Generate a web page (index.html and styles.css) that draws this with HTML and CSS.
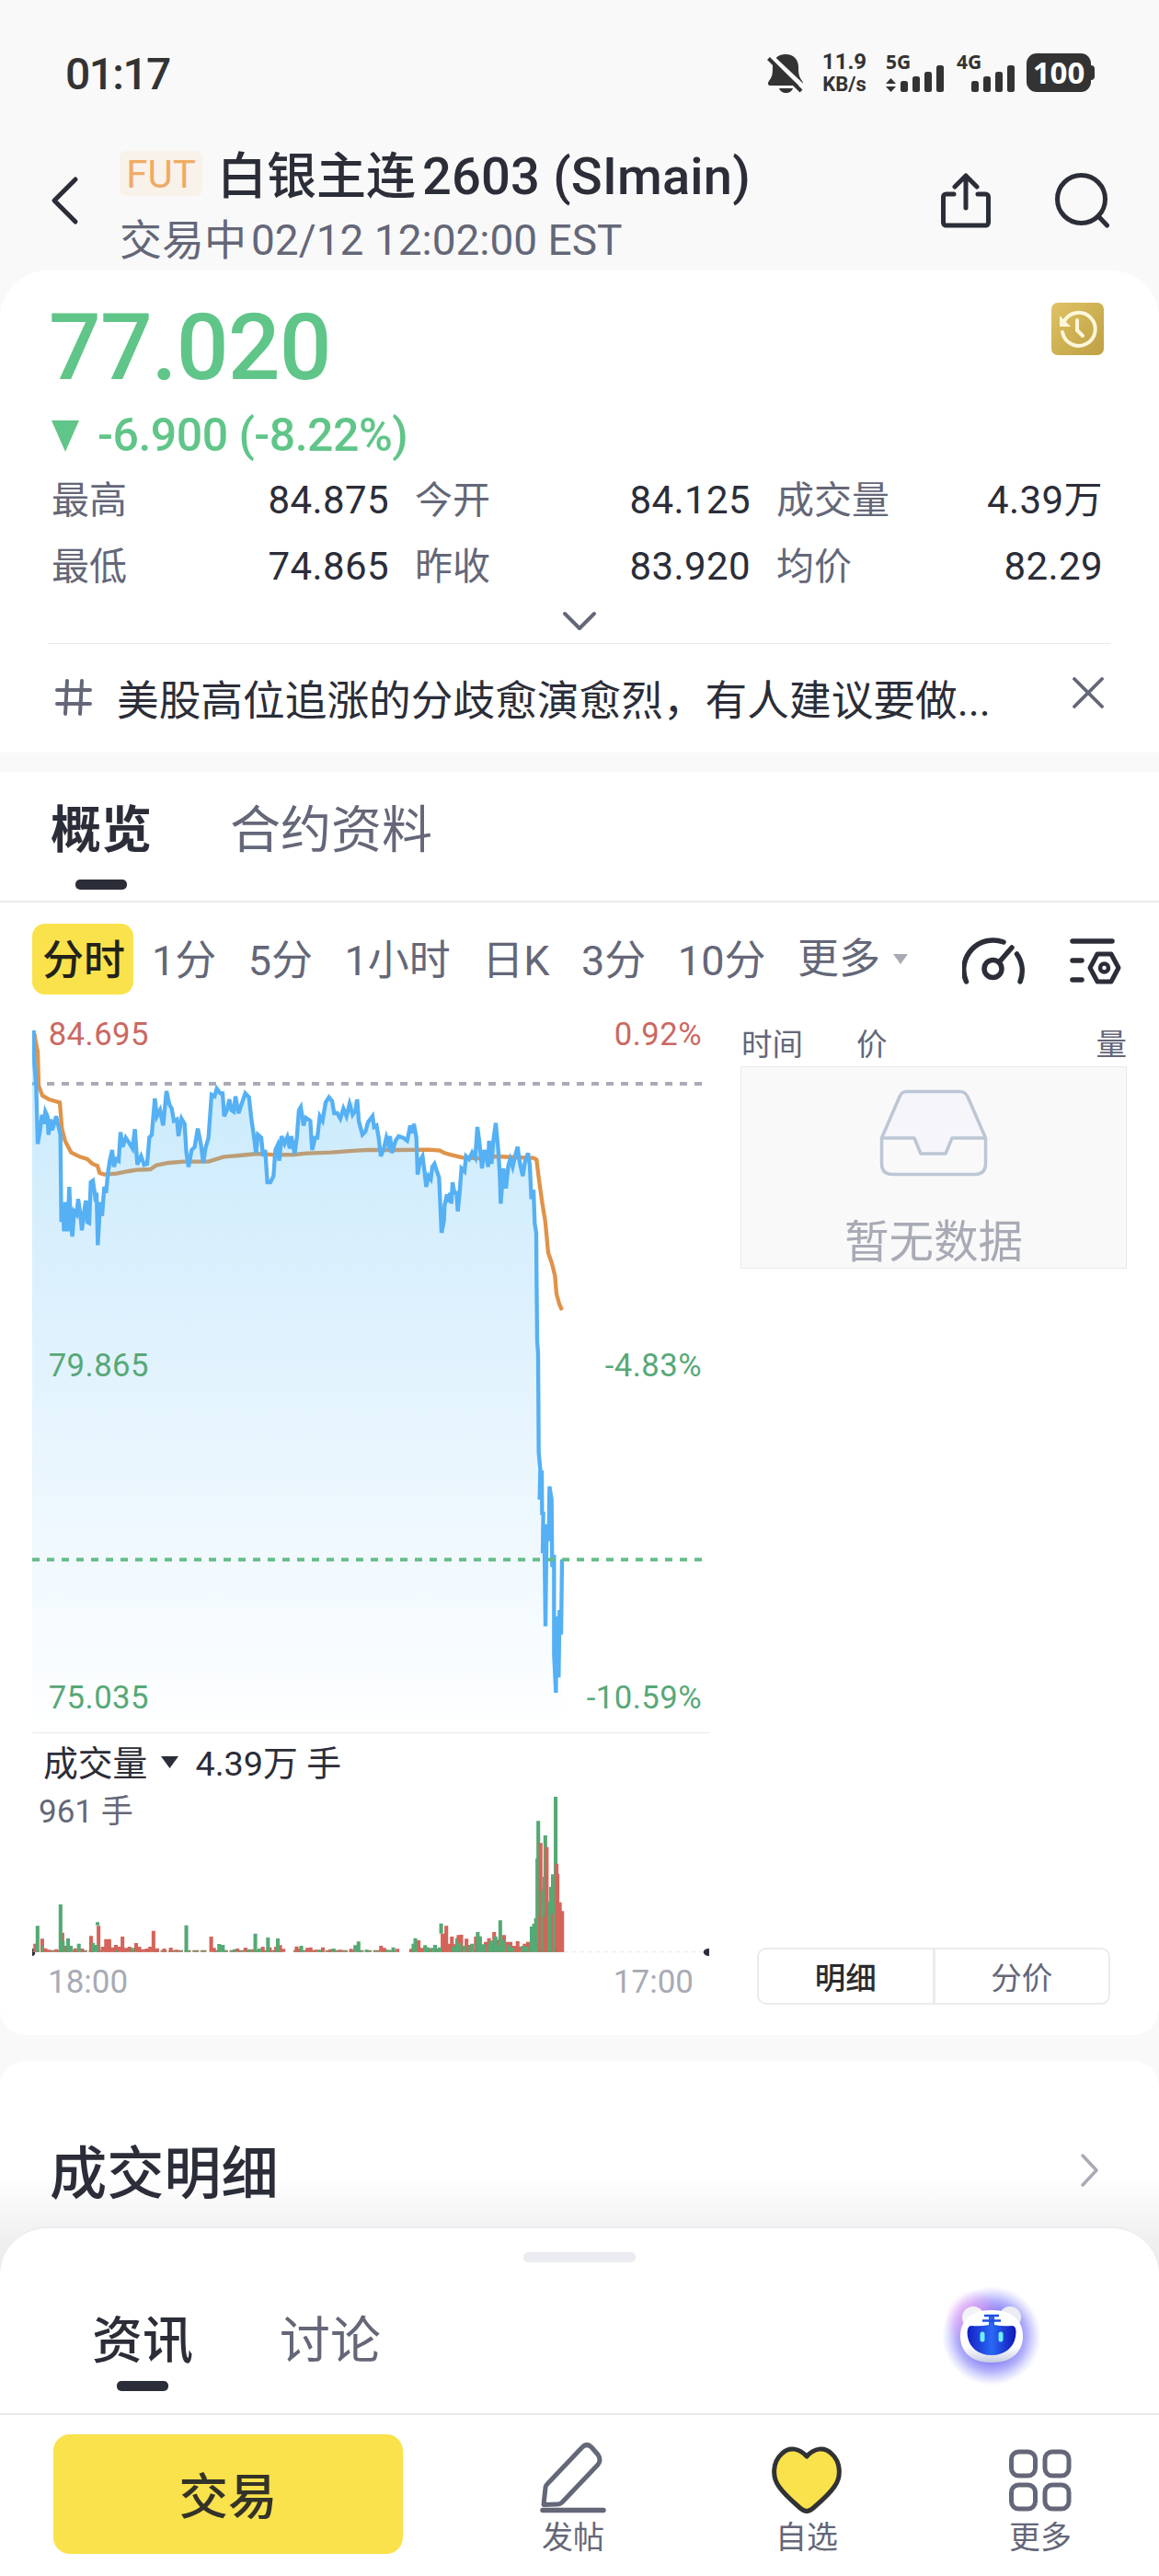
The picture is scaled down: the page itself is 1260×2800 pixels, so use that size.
FILE: index.html
```html
<!DOCTYPE html>
<html lang="zh-CN">
<head>
<meta charset="utf-8">
<title>白银主连2603 (SImain)</title>
<link rel="stylesheet" href="styles.css">
</head>
<body>

<div class="statusbar">
	<div class="clock">01:17</div>
	<div class="indicators">
		<svg class="bell" width="40" height="44" viewBox="0 0 40 44">
			<path d="M20 1C11 1 6 7 6 15c0 9-1 11-4 15-2 3-1 5 2 5h32c3 0 4-2 2-5-3-4-4-7-4-15 0-8-5-14-14-14z" fill="#333"/>
			<path d="M13 38h15c-1 3-4 5-7.500 5s-6.500-2-7.500-5z" fill="#333"/>
			<path d="M4 3l36 34" stroke="#f9f9f9" stroke-width="5"/>
			<path d="M1.500 5.500L37 41" stroke="#333" stroke-width="4"/>
		</svg>
		<div class="speed"><div class="rate">11.9</div><div class="unit">KB/s</div></div>
		<div class="signal sim1">
			<div class="net">5G</div>
			<svg width="63" height="30" viewBox="0 0 63 30">
				<path d="M0 20l5.500-6 5.500 6zM0 23h11l-5.500 6z" fill="#333"/>
				<rect x="16" y="17" width="8" height="12" rx="2.500" fill="#333"/>
				<rect x="29" y="12" width="8" height="17" rx="2.500" fill="#333"/>
				<rect x="42" y="7" width="8" height="22" rx="2.500" fill="#333"/>
				<rect x="55" y="0" width="8" height="29" rx="2.500" fill="#333"/>
			</svg>
		</div>
		<div class="signal sim2">
			<div class="net">4G</div>
			<svg width="63" height="30" viewBox="0 0 63 30">
				<rect x="16" y="17" width="8" height="12" rx="2.500" fill="#333"/>
				<rect x="29" y="12" width="8" height="17" rx="2.500" fill="#333"/>
				<rect x="42" y="7" width="8" height="22" rx="2.500" fill="#333"/>
				<rect x="55" y="0" width="8" height="29" rx="2.500" fill="#333"/>
			</svg>
		</div>
		<div class="battery">100</div>
		<div class="battery-cap"></div>
	</div>
</div>

<div class="header">
	<svg class="back" width="34" height="54" viewBox="0 0 34 54"><path d="M29 4L6 27l23 23" fill="none" stroke="#2b2d38" stroke-width="5" stroke-linecap="round" stroke-linejoin="round"/></svg>
	<div class="names">
		<div class="name"><span class="tag">FUT</span><span class="cn">白银主连</span><span class="code">2603 (SImain)</span></div>
		<div class="state"><span class="cn">交易中</span><span>02/12 12:02:00 EST</span></div>
	</div>
	<svg class="share" width="54" height="60" viewBox="0 0 54 60"><path d="M14 23H5.500a3 3 0 0 0-3 3v28a3 3 0 0 0 3 3h43a3 3 0 0 0 3-3V26a3 3 0 0 0-3-3H40M27 38V3M15 15L27 3l12 12" fill="none" stroke="#2b2d38" stroke-width="5" stroke-linecap="round" stroke-linejoin="round"/></svg>
	<svg class="search" width="60" height="60" viewBox="0 0 60 60"><circle cx="28.500" cy="28.500" r="26" fill="none" stroke="#2b2d38" stroke-width="5"/><path d="M47 47l9.500 10" stroke="#2b2d38" stroke-width="5" stroke-linecap="round"/></svg>
</div>

<div class="quote">
	<div class="quote-top">
		<div class="price">77.020</div>
		<svg class="history" width="57" height="57" viewBox="0 0 57 57">
			<defs><linearGradient id="gold" x1="0" y1="0" x2="1" y2="1"><stop offset="0" stop-color="#e0c266"/><stop offset=".5" stop-color="#cdb152"/><stop offset="1" stop-color="#bf9f45"/></linearGradient></defs>
			<rect width="57" height="57" rx="7" fill="url(#gold)"/>
			<path d="M14 20A18 18 0 1 1 12 32" fill="none" stroke="#fff7dc" stroke-width="4" stroke-linecap="round"/>
			<path d="M9 14v12h12z" fill="#fff7dc"/>
			<path d="M28 19v11l6 6" fill="none" stroke="#fff7dc" stroke-width="4" stroke-linecap="round" stroke-linejoin="round"/>
		</svg>
	</div>
	<div class="change"><svg width="30" height="34" viewBox="0 0 30 34"><path d="M0 0h30L15 34z" fill="#60c588"/></svg>-6.900 (-8.22%)</div>
	<div class="stats">
		<div class="stat"><span>最高</span><b>84.875</b></div>
		<div class="stat"><span>今开</span><b>84.125</b></div>
		<div class="stat"><span>成交量</span><b>4.39万</b></div>
		<div class="stat"><span>最低</span><b>74.865</b></div>
		<div class="stat"><span>昨收</span><b>83.920</b></div>
		<div class="stat"><span>均价</span><b>82.29</b></div>
	</div>
	<div class="expand"><svg width="38" height="24" viewBox="0 0 38 24"><path d="M3 3l16 16L35 3" fill="none" stroke="#646778" stroke-width="4" stroke-linecap="round" stroke-linejoin="round"/></svg></div>
	<div class="topic">
		<svg class="hash" width="40" height="40" viewBox="0 0 40 40"><path d="M2 12h36M2 27h36M13 2l-2 36M29 2l-2 36" stroke="#646778" stroke-width="4" stroke-linecap="round"/></svg>
		<div class="topic-text">美股高位追涨的分歧愈演愈烈，有人建议要做...</div>
		<svg class="close" width="34" height="34" viewBox="0 0 34 34"><path d="M2 2l30 30M32 2L2 32" stroke="#646778" stroke-width="3.800" stroke-linecap="round"/></svg>
	</div>
</div>

<div class="overview">
	<div class="tabs">
		<div class="tab active">概览</div>
		<div class="tab">合约资料</div>
	</div>
	<div class="toolbar">
		<div class="period selected">分时</div>
		<div class="periods">
			<div class="period">1分</div>
			<div class="period">5分</div>
			<div class="period">1小时</div>
			<div class="period">日K</div>
			<div class="period">3分</div>
			<div class="period">10分</div>
			<div class="period more">更多<svg width="16" height="11" viewBox="0 0 16 11"><path d="M0 0h16L8 11z" fill="#a8aab5"/></svg></div>
		</div>
		<svg class="gauge" width="68" height="54" viewBox="0 0 68 54"><path d="M4.500 50A32 32 0 0 1 45 7M63 50A32 32 0 0 0 59.500 20" fill="none" stroke="#2b2d38" stroke-width="5.500" stroke-linecap="round"/><circle cx="33.500" cy="36" r="9.500" fill="none" stroke="#2b2d38" stroke-width="5.500"/><path d="M40 29l14-16" stroke="#2b2d38" stroke-width="5.500" stroke-linecap="round"/></svg>
		<svg class="adjust" width="56" height="54" viewBox="0 0 56 54"><path d="M3 6h43M3 27h10M3 48h10" stroke="#2b2d38" stroke-width="5.500" stroke-linecap="round"/><path d="M30 20h15l8 15-8 15H30l-8-15z" fill="none" stroke="#2b2d38" stroke-width="5" stroke-linejoin="round"/><circle cx="37.500" cy="35" r="4.500" fill="none" stroke="#2b2d38" stroke-width="4.500"/></svg>
	</div>

	<div class="main">
		<div class="charts">
			<!-- price: 3 units per px -->
			<svg class="minute" width="736" height="793" viewBox="105 0 2208 2379">
				<defs><linearGradient id="area" gradientUnits="userSpaceOnUse" x1="0" y1="260" x2="0" y2="2330"><stop offset="0" stop-color="#54bef5" stop-opacity=".3"/><stop offset=".35" stop-color="#54b8f8" stop-opacity=".2"/><stop offset="1" stop-color="#54b8f8" stop-opacity="0.010"/></linearGradient></defs>
				<path d="M105 264H2290" stroke="#a9abb6" stroke-width="12" stroke-dasharray="24 24"/>
				<path class="avg" d="M112 100L118 135 123 160 126 270 138 302 160 315 195 325 202 410 212 450 232 488 260 502 285 510 300 524 318 532 325 555 340 560 380 557 420 549 445 545 490 543 510 530 550 522 600 518 680 518 730 502 780 498 840 492 900 496 960 495 1000 491 1080 488 1160 482 1200 480 1300 480 1400 479 1435 482 1450 490 1475 497 1510 505 1560 507 1620 501 1680 504 1740 506 1750 512 1757 570 1768 650 1778 710 1788 815 1800 850 1810 890 1815 950 1824 982 1833 1002"/>
				<path fill="url(#area)" d="M105 2330V90H110L118 270 123 460 137 365 148 355 158 430 165 380 175 410 183 370 197 430 200 710 209 745 213 650 220 745 226 600 236 762 242 680 250 690 255 640 267 742 280 645 285 715 291 718 296 585 303 580 315 620 319 790 327 640 333 700 340 600 352 555 358 515 366 480 371 535 387 515 393 422 400 470 410 440 432 475 440 412 448 528 480 525 487 440 495 430 505 312 512 370 522 350 532 400 543 288 567 385 577 380 582 435 592 378 602 395 615 535 625 480 635 470 645 410 663 522 680 440 690 300 707 280 726 295 731 370 748 315 758 355 768 305 778 355 800 295 812 308 820 380 835 490 841 430 852 440 858 500 865 480 872 585 882 585 892 565 898 480 905 465 911 515 918 435 950 435 961 492 975 350 981 340 990 400 1012 385 1018 480 1043 370 1062 325 1073 308 1090 360 1110 375 1140 330 1165 315 1170 385 1182 430 1200 390 1215 370 1235 440 1242 500 1260 440 1272 435 1278 490 1300 435 1328 450 1338 400 1350 395 1358 440 1362 560 1380 500 1390 600 1415 525 1432 570 1440 750 1455 630 1472 655 1476 590 1487 615 1493 680 1505 540 1520 500 1550 495 1557 405 1572 540 1580 480 1592 530 1603 520 1617 392 1625 480 1633 655 1642 540 1650 605 1658 530 1688 470 1705 565 1722 490 1733 640 1740 610 1749 750 1752 1103 1757 1467 1760 1620 1770 1795 1779 2033 1783 1700 1792 1577 1801 1840 1807 2125 1813 2250 1822 2200 1833 1815V2330Z"/>
				<path class="line" d="M110 90L112 200 118 270 123 460 130 420 137 365 143 395 148 355 155 370 158 430 165 380 170 415 175 400 183 370 190 400 197 430 200 715 205 660 209 745 213 650 217 700 220 745 226 600 231 720 236 762 242 680 250 690 255 640 262 690 267 742 273 690 280 645 285 715 291 718 296 585 303 580 310 630 315 620 319 790 327 650 333 695 340 600 346 620 352 555 358 515 366 480 371 535 380 510 387 515 393 422 400 470 410 440 420 455 432 475 440 412 448 528 460 500 470 528 480 525 487 440 495 430 505 312 512 370 522 350 532 400 543 288 552 330 560 345 567 385 577 380 582 435 592 378 602 395 608 490 615 535 625 480 635 470 645 410 655 460 663 522 670 475 680 440 690 300 700 305 707 280 718 295 726 295 731 370 740 350 748 315 755 350 762 355 768 305 778 360 788 330 800 295 812 308 820 380 828 435 835 490 841 430 852 440 858 500 865 480 872 585 882 585 892 565 898 480 905 465 911 515 918 435 928 460 937 438 945 475 950 435 961 492 968 440 975 350 981 340 990 400 998 375 1012 385 1018 480 1028 440 1035 440 1043 370 1052 385 1062 325 1073 308 1083 320 1090 360 1100 360 1110 378 1120 345 1130 370 1140 330 1150 365 1160 350 1165 315 1170 385 1182 430 1192 420 1200 390 1215 370 1220 405 1228 400 1235 440 1242 500 1252 475 1260 440 1266 460 1272 435 1278 490 1290 450 1300 435 1315 440 1328 450 1338 400 1343 425 1350 395 1358 440 1362 560 1370 515 1378 500 1384 545 1390 600 1398 565 1405 575 1410 535 1417 525 1425 550 1432 570 1436 660 1440 750 1448 710 1450 660 1458 625 1463 650 1468 620 1472 655 1476 585 1482 620 1489 620 1493 680 1499 620 1505 540 1515 550 1520 500 1530 510 1540 488 1550 505 1557 405 1563 450 1572 540 1580 480 1586 500 1592 535 1595 450 1603 525 1610 440 1617 392 1625 480 1630 560 1633 655 1642 540 1650 605 1658 530 1664 510 1672 535 1680 500 1688 470 1695 520 1705 565 1712 520 1722 490 1728 530 1733 640 1740 610 1744 720 1749 750 1750 900 1752 1103 1755 1144 1757 1467 1762 1520 1760 1620 1767 1525 1768 1670 1772 1660 1770 1795 1775 1705 1779 2033 1783 1700 1790 1755 1792 1577 1799 1620 1801 1840 1807 1800 1807 2125 1813 2250 1816 2000 1822 2200 1825 1980 1830 2060 1833 1815"/>
				<path d="M105 1816H2290" stroke="#66bd89" stroke-width="12" stroke-dasharray="24 24"/>
				<text class="up" x="158" y="138">84.695</text>
				<text class="up end" x="2289" y="138">0.92%</text>
				<text class="down" x="158" y="1218">79.865</text>
				<text class="down end" x="2289" y="1218">-4.83%</text>
				<text class="down" x="158" y="2301">75.035</text>
				<text class="down end" x="2289" y="2301">-10.59%</text>
			</svg>
			<div class="vol-title">成交量<svg width="19" height="13" viewBox="0 0 19 13"><path d="M0 0h19L9.500 13z" fill="#2b2d38"/></svg>4.39万 手</div>
			<div class="vol">
				<svg width="736" height="190" viewBox="68.600 300 1442.600 570" preserveAspectRatio="none">
					<path d="M1200 845H1510" stroke="#e9e9ee" stroke-width="3" stroke-dasharray="11 6"/>
					<ellipse cx="68" cy="846" rx="7" ry="12" fill="#2b2d38"/>
					<ellipse cx="1510" cy="846" rx="11" ry="12" fill="#2b2d38"/>
					<path d="M70 842H440M455 842H600M625 842H850M872 842H1200" stroke="#87805f" stroke-width="6" stroke-dasharray="14 3"/>
					<path class="bar red" d="M75 845V818M90 845V802M97 845V833M104 845V838M120 845V836M133 845V782M139 845V825M160 845V833M175 845V834M194 845V793M210 845V760M219 845V828M226 845V803M233 845V803M240 845V830M247 845V822M254 845V828M261 845V795M268 845V832M276 845V828M290 845V816M297 845V828M305 845V836M313 845V834M320 845V828M327 845V776M335 845V833M350 845V834M364 845V831M376 845V838M450 845V795M456 845V832M506 845V834M523 845V831M538 845V836M560 845V828M575 845V830M588 845V828M597 845V823M604 845V835M632 845V827M638 845V833M655 845V832M662 845V830M673 845V838M688 845V830M704 845V836M725 845V838M748 845V835M812 845V825M819 845V832M847 845V835M876 845V835M892 845V807M900 845V832M917 845V833M932 845V834M943 845V785M951 845V760M957 845V818M963 845V795M969 845V820M977 845V790M983 845V789M994 845V802M1000 845V822M1014 845V795M1025 845V830M1035 845V812M1042 845V800M1053 845V780M1060 845V805M1074 845V790M1080 845V812M1088 845V812M1095 845V825M1103 845V810M1110 845V828M1118 845V818M1125 845V812"/>
					<path class="bar green" d="M80 845V760M129 845V690M134 845V810M145 845V801M151 845V825M168 845V818M198 845V815M206 845V822M208 758V748M282 845V832M397 845V758M467 845V819M475 845V822M500 845V836M530 845V836M544 845V785M553 845V834M571 845V798M592 845V801M642 845V825M680 845V838M711 845V834M757 845V823M764 845V811M781 845V838M826 845V838M838 845V830M881 845V818M885 845V800M906 845V823M912 845V830M922 845V832M927 845V822M937 845V830M940 785V752M966 845V828M974 845V818M989 845V825M1006 845V818M1018 845V780M1023 845V794M1031 845V820M1046 845V808M1056 845V795M1066 845V742M1071 845V805M1084 845V822M1092 845V830M1114 845V825M1122 845V828"/>
					<path class="thin green" d="M90 845V825M134 845V822M196 845V825M248 845V838M972 845V800M980 845V815M1000 845V826M1040 845V820M1049 845V812M1062 845V825M1076 845V815"/>
					<!-- sell-off at noon -->
					<path class="bar green" d="M1133 845V762M1138 845V753M1142 845V735M1145 845V540M1147 845V418M1156 845V640M1160 845V600M1162 845V465M1170 845V680M1174 845V633M1178 845V592M1184 845V339"/>
					<path class="bar red" d="M1152 845V490M1165 845V503M1186 845V557M1188 845V590M1193 845V683M1198 845V712"/>
					<path class="thin green" d="M1154 845V645M1169 845V683M1181 845V690"/>
					<path class="thin red" d="M1149 845V730M1176 845V720M1159 845V730"/>
				</svg>
				<div class="vol-max">961 手</div>
			</div>
			<div class="hours"><span>18:00</span><span>17:00</span></div>
		</div>

		<div class="ticks">
			<div class="ticks-head"><span class="c-time">时间</span><span class="c-price">价</span><span>量</span></div>
			<div class="empty">
				<svg width="118" height="96" viewBox="0 0 118 96">
					<path d="M2.500 53L21 8q2.500-5.500 8-5.500h59q5.500 0 8 5.500l19.500 45H79l-7 17H45l-7-17z" fill="#f6f6fa"/>
					<path d="M2.500 53L22 8q2.500-5.500 7-5.500h59q5 0 8 5.500l19.500 45v28q0 11.500-12 11.500h-89q-12 0-12-11.500zH38l7 17h27l7-17h36.500" fill="none" stroke="#bcc6d5" stroke-width="3.500" stroke-linejoin="round"/>
				</svg>
				<div>暂无数据</div>
			</div>
			<div class="switch"><div class="on">明细</div><div>分价</div></div>
		</div>
	</div>
</div>

<div class="details">
	<div class="details-title">成交明细</div>
	<svg width="22" height="38" viewBox="0 0 22 38"><path d="M3 3l15 16L3 35" fill="none" stroke="#a8aab5" stroke-width="3.500" stroke-linecap="round" stroke-linejoin="round"/></svg>
</div>

<div class="sheet">
	<div class="handle"></div>
	<div class="sheet-tabs">
		<div class="tab active">资讯</div>
		<div class="tab">讨论</div>
		<svg class="robot" width="140" height="140" viewBox="0 0 140 140">
			<defs>
				<radialGradient id="glow"><stop offset=".5" stop-color="#7f78f5" stop-opacity=".95"/><stop offset=".72" stop-color="#8f8bf8" stop-opacity=".65"/><stop offset="1" stop-color="#a9a9ff" stop-opacity="0"/></radialGradient>
				<radialGradient id="pink"><stop offset="0" stop-color="#f59cf3" stop-opacity=".9"/><stop offset="1" stop-color="#f59cf3" stop-opacity="0"/></radialGradient>
				<linearGradient id="shell" x1="0" y1="0" x2="0" y2="1"><stop offset=".7" stop-color="#fff"/><stop offset="1" stop-color="#c9cce0"/></linearGradient>
				<linearGradient id="visor"><stop offset="0" stop-color="#1421c4"/><stop offset=".5" stop-color="#2a68f5"/><stop offset="1" stop-color="#1115b8"/></linearGradient>
			</defs>
			<circle cx="70" cy="70" r="54" fill="url(#glow)"/>
			<circle cx="50" cy="51" r="31" fill="url(#pink)"/>
			<circle cx="50" cy="50" r="12" fill="#f3f3f6"/>
			<circle cx="90" cy="50" r="12" fill="#ececf2"/>
			<path d="M70 42c24 0 34 13 34 28s-9 29-34 29-34-14-34-29 10-28 34-28z" fill="url(#shell)"/>
			<path d="M48 59q10 1 19-1V47h6v11q9 2 19 1c5 0 5 6 4 12-2 12-12 20-26 20s-24-8-26-20c-1-6 0-12 4-12z" fill="url(#visor)"/>
			<path d="M62 48h16M60 53.500h20" stroke="#1f4fe0" stroke-width="2.500"/>
			<path d="M60 68v6M80 68v6" stroke="#6df0fb" stroke-width="5" stroke-linecap="round"/>
		</svg>
	</div>
	<div class="actions">
		<div class="trade">交易</div>
		<div class="action">
			<svg width="76" height="78" viewBox="0 0 76 78"><path d="M48 6q5-5 10 0l7 8q4 6 0 11L26 66q-2 2-5 2L6 68.500 8 50q0-2 2-4z" fill="none" stroke="#646778" stroke-width="5" stroke-linejoin="round"/><path d="M5 74.500h66" stroke="#646778" stroke-width="5.500" stroke-linecap="round"/></svg>
			<div>发帖</div>
		</div>
		<div class="action">
			<svg width="78" height="78" viewBox="0 0 78 78"><path d="M39 16C31 7 20 5 12 13 2 22 1 38 9 49c7 10 16 17 24 24q6 5 12 0c8-7 17-14 24-24 8-11 7-27-3-36C58 5 47 7 39 16z" fill="#fae24c" stroke="#303236" stroke-width="5" stroke-linejoin="round"/></svg>
			<div>自选</div>
		</div>
		<div class="action">
			<svg width="70" height="78" viewBox="0 0 70 78"><g fill="none" stroke="#646778" stroke-width="5"><rect x="3.500" y="11" width="26" height="26" rx="8"/><rect x="40" y="11" width="26" height="26" rx="8"/><rect x="3.500" y="47" width="26" height="26" rx="8"/><rect x="40" y="47" width="26" height="26" rx="8"/></g></svg>
			<div>更多</div>
		</div>
	</div>
</div>

</body>
</html>
```

FILE: styles.css
```css
html, body {
	margin: 0;
	padding: 0;
}
body {
	width: 1260px;
	height: 2800px;
	overflow: hidden;
	background-color: #f9f9f9;
	color: #2b2d38;
	font-family: Roboto, "Noto Sans CJK SC", sans-serif;
}
svg {
	display: block;
	flex-shrink: 0;
}

/* Status bar */
.statusbar {
	display: flex;
	justify-content: space-between;
	align-items: center;
	height: 158px;
	padding: 0 70px 0 71px;
	color: #333;
}
.clock {
	padding-top: 3px;
	font-size: 48px;
	font-weight: 500;
	line-height: 60px;
	letter-spacing: -1.6px;
}
.indicators {
	display: flex;
	height: 42px;
	font-family: "Noto Sans", sans-serif;
	font-weight: 700;
}
.speed {
	width: 56px;
	margin-left: 16px;
	text-align: center;
}
.rate {
	font-family: Roboto, sans-serif;
	font-size: 24px;
	line-height: 18px;
}
.unit {
	font-family: Roboto, sans-serif;
	font-size: 22px;
	line-height: 32px;
}
.signal {
	width: 63px;
}
.sim1 {
	margin-left: 17px;
}
.sim2 {
	margin-left: 14px;
}
.net {
	height: 13px;
	font-size: 21px;
	line-height: 18px;
}
.battery {
	width: 70px;
	margin-left: 13px;
	border-radius: 11px;
	background-color: #333;
	color: white;
	font-size: 33px;
	line-height: 42px;
	text-align: center;
}
.battery-cap {
	width: 4px;
	height: 16px;
	margin-top: 13px;
	border-radius: 0 4px 4px 0;
	background-color: #333;
}

/* Header */
.header {
	display: flex;
	align-items: flex-start;
	height: 130px;
	padding: 6px 53px 0 53px;
}
.back {
	margin-top: 27px;
}
.names {
	flex: 1;
	margin-left: 43px;
}
.name {
	display: flex;
	font-size: 54px;
	font-weight: 500;
	line-height: 57px;
}
.tag {
	width: 90px;
	height: 49px;
	margin-right: 16px;
	border-radius: 7px;
	background-color: #f8f2ea;
	color: #f0ab63;
	font-size: 42px;
	font-weight: 400;
	line-height: 52px;
	text-align: center;
}
.name .cn {
	margin-right: 7px;
}
.code {
	font-size: 56px;
	letter-spacing: 0.2px;
}
.state {
	display: flex;
	margin-top: 15px;
	color: #646778;
	font-size: 46px;
	line-height: 50px;
}
.state .cn {
	margin-right: 5px;
}
.share, .search {
	margin-top: 24px;
}
.search {
	margin-left: 70px;
}

/* Quote */
.quote {
	height: 524px;
	padding: 0 56px;
	box-sizing: border-box;
	border-radius: 52px 52px 0 0;
	background-color: white;
}
.quote-top {
	display: flex;
	justify-content: space-between;
	padding-top: 34px;
}
.price {
	color: #60c588;
	font-size: 100px;
	font-weight: 500;
	line-height: 100px;
	margin-left: -3px;
	letter-spacing: -0.9px;
}
.history {
	margin-top: 1px;
	margin-right: 4px;
}
.change {
	display: flex;
	align-items: center;
	gap: 20px;
	margin-top: 15px;
	color: #60c588;
	font-size: 50px;
	font-weight: 500;
	line-height: 61px;
	letter-spacing: -0.5px;
}
.stats {
	display: grid;
	grid-template-columns: 366px 364px 354px;
	column-gap: 29px;
	margin-top: 4px;
	font-size: 42px;
	line-height: 72px;
}
.stat {
	display: flex;
	justify-content: space-between;
	color: #646778;
}
.stat span {
	font-size: 41px;
}
.stat b {
	color: #2b2d38;
	font-weight: 400;
	letter-spacing: 0.4px;
	margin-right: -1px;
}
.expand {
	display: flex;
	justify-content: center;
	align-items: center;
	height: 47px;
	margin: 0 -3px;
	border-bottom: 1px solid #e9e9ec;
}
.topic {
	display: flex;
	align-items: center;
	height: 116px;
	padding-left: 4px;
}
.topic-text {
	flex: 1;
	margin-left: 27px;
	font-size: 45.7px;
	line-height: 60px;
	margin-top: 9px;
}
.close {
	margin-right: 4px;
	margin-bottom: 10px;
}

/* Overview */
.overview {
	height: 1373px;
	margin-top: 21px;
	border-radius: 0 0 28px 28px;
	background-color: white;
}
.tabs {
	display: flex;
	gap: 85px;
	height: 140px;
	padding: 0 55px;
	border-bottom: 2px solid #ebebed;
}
.tab {
	padding-top: 33px;
	color: #646778;
	font-size: 55px;
	line-height: 60px;
}
.tab.active {
	color: #2b2d38;
	font-weight: 700;
}
.tab.active::after {
	content: "";
	display: block;
	width: 56px;
	height: 11px;
	margin: 24px auto 0;
	border-radius: 5px;
	background-color: #2b2d38;
}
.toolbar {
	display: flex;
	align-items: center;
	height: 77px;
	padding: 23px 41px 9px 35px;
	font-size: 45px;
	line-height: 81px;
}
.periods {
	display: flex;
	justify-content: space-between;
	width: 822px;
	margin-left: 20px;
}
.period {
	height: 77px;
	color: #646778;
}
.period.selected {
	width: 108px;
	padding-left: 2px;
	border-radius: 14px;
	background-color: #fae24c;
	color: #22221a;
	font-weight: 500;
	text-align: center;
}
.more {
	display: flex;
	align-items: center;
	gap: 14px;
}
.gauge {
	margin-left: auto;
}
.adjust {
	margin-left: 49px;
}
.gauge, .adjust {
	margin-top: 2px;
}
.main {
	display: flex;
	gap: 34px;
	height: 1089px;
	padding-left: 35px;
}
.charts {
	width: 736px;
}
.minute {
	border-bottom: 1px solid #e9e9ec;
}
.minute text {
	font-size: 104px;
	letter-spacing: 1.4px;
}
.line, .avg {
	fill: none;
	stroke: #55b0f4;
	stroke-width: 13px;
}
.avg {
	stroke: #e0934a;
}
.up {
	fill: #cb6861;
}
.down {
	fill: #57a877;
}
.end {
	text-anchor: end;
}
.vol-title {
	display: flex;
	align-items: center;
	margin-top: 10px;
	padding-left: 12px;
	font-size: 37.8px;
	line-height: 46px;
}
.vol-title svg {
	margin: 0 18px 4px 15px;
}
.vol {
	display: grid;
}
.vol svg, .vol-max {
	grid-area: 1 / 1;
}
.vol-max {
	padding: 9px 0 0 7px;
	color: #646778;
	font-size: 35px;
	line-height: 42px;
}
.bar, .thin {
	fill: none;
	stroke-width: 8px;
}
.thin {
	stroke-width: 4px;
}
.green {
	stroke: #55a974;
}
.red {
	stroke: #d4645a;
}
.hours {
	display: flex;
	justify-content: space-between;
	margin-top: 4px;
	padding: 0 17px 0 17px;
	color: #a8aab5;
	font-size: 35px;
	line-height: 41px;
}
.ticks {
	display: flex;
	flex-direction: column;
	width: 420px;
}
.ticks-head {
	display: flex;
	height: 49px;
	padding: 20px 0 0 1px;
	justify-content: space-between;
	color: #646778;
	font-size: 33.5px;
	line-height: 51px;
}
.c-time {
	width: 125px;
}
.c-price {
	flex: 1;
}
.empty {
	display: flex;
	flex-direction: column;
	align-items: center;
	height: 195px;
	padding-top: 24px;
	border: 1px solid #e9e9ec;
	background-color: #f9f9f9;
	color: #a8aab5;
	font-size: 48.500px;
	line-height: 60px;
	height: 194px;
}
.empty svg {
	margin-bottom: 41px;
}
.switch {
	display: flex;
	height: 58px;
	margin: auto 18px 0;
	border: 2px solid #ebebef;
	border-radius: 10px;
	color: #646778;
	font-size: 33.500px;
	line-height: 63px;
	text-align: center;
}
.switch div {
	flex: 1;
}
.switch .on {
	border-right: 3px solid #ebebef;
	color: #2b2b2e;
	font-weight: 500;
}

/* Trade details, runs under the sheet */
.details {
	display: flex;
	justify-content: space-between;
	height: 240px;
	margin-top: 28px;
	padding: 0 64px 0 54px;
	border-radius: 28px 28px 0 0;
	background: linear-gradient(#fff 125px, #f3f3f3 180px, #e9e9ea 230px);
}
.details-title {
	margin-top: 86px;
	font-size: 62.200px;
	font-weight: 500;
	line-height: 76px;
}
.details svg {
	margin-top: 100px;
}

/* Bottom sheet */
.sheet {
	position: relative;
	height: 378px;
	margin-top: -60px;
	border-top: 2px solid #ebecf1;
	border-radius: 52px 52px 0 0;
	background-color: white;
}
.handle {
	width: 122px;
	height: 11px;
	margin: 0 auto;
	border-radius: 5px;
	background-color: #ebecf1;
}
.sheet::before {
	content: "";
	display: block;
	height: 26px;
}
.sheet-tabs {
	display: flex;
	gap: 94px;
	height: 164px;
	padding: 0 112px 0 100px;
	border-bottom: 2px solid #e9e9ec;
}
.sheet-tabs .tab {
	padding-top: 55px;
}
.sheet-tabs .active {
	font-weight: 500;
}
.sheet-tabs .active::after {
	margin-top: 14px;
}
.robot {
	margin: 10px 0 0 auto;
}
.actions {
	display: flex;
}
.trade {
	width: 380px;
	height: 130px;
	margin: 21px 58px 0;
	border-radius: 18px;
	background-color: #fae24c;
	color: #33332a;
	font-size: 53.500px;
	font-weight: 500;
	line-height: 138px;
	text-align: center;
}
.action {
	display: flex;
	flex-direction: column;
	align-items: center;
	width: 254px;
	padding-top: 29px;
	color: #646778;
	font-size: 34px;
	line-height: 52px;
}
```
